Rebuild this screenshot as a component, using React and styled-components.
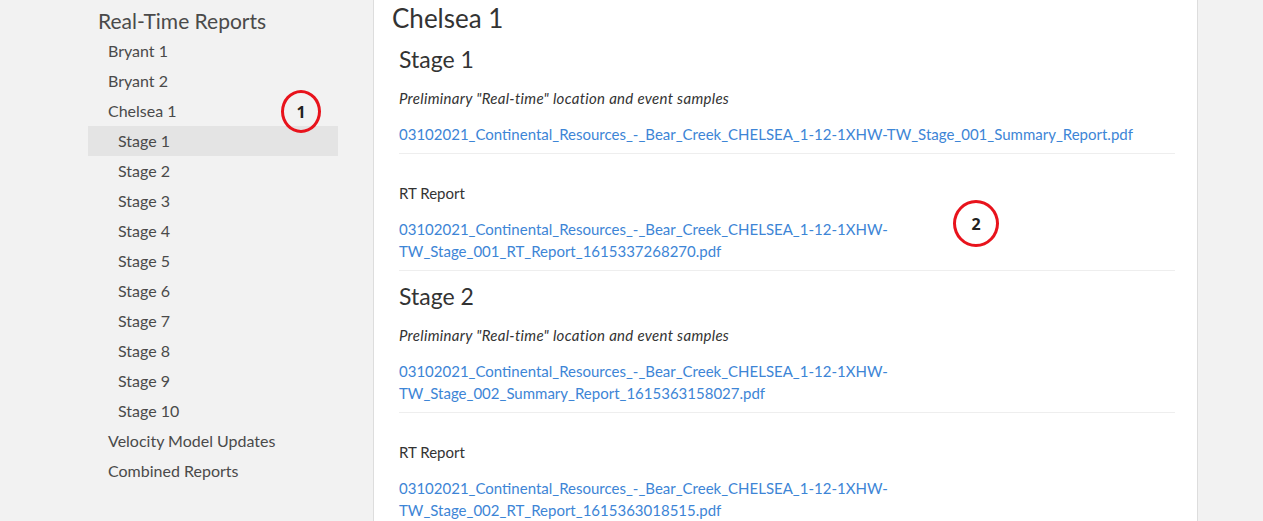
import styled, { createGlobalStyle } from 'styled-components';

const GlobalStyle = createGlobalStyle`
  html, body {
    margin: 0;
    padding: 0;
    background: #f2f2f2;
    font-family: Lato, 'Noto Sans', sans-serif;
    color: #333;
  }
`;

// page layout
const Page = styled.div`
  display: flex;
  align-items: stretch;
  min-height: 521px;
  padding-left: 88px;
  position: relative;
`;

// menu on the left
const Sidebar = styled.nav`
  width: 250px;
  padding-top: 6px;
  margin-right: 35px;
  flex-shrink: 0;
`;

const SideTitle = styled.div`
  font-size: 21px;
  line-height: 30px;
  padding-left: 10px;
  color: #4a4a4a;
`;

const SideItem = styled.div`
  font-size: 16px;
  line-height: 30px;
  padding-left: ${(p) => (p.$sub ? 30 : 20)}px;
  color: #4a4a4a;
  background: ${(p) => (p.$active ? '#e4e4e4' : 'transparent')};
`;

// white panel
const Main = styled.main`
  width: 825px;
  background: #fff;
  border-left: 1px solid #ddd;
  border-right: 1px solid #ddd;
  padding: 3px 22px 0 18px;
  box-sizing: border-box;
`;

const Heading = styled.h1`
  font-size: 26px;
  font-weight: 400;
  line-height: 30px;
  margin: 0 0 13px;
  color: #333;
`;

const Stage = styled.section`
  padding-left: 7px;
  & + & {
    margin-top: 12px;
  }
`;

const StageTitle = styled.h2`
  font-size: 23px;
  font-weight: 400;
  line-height: 27px;
  margin: 0 0 15px;
  color: #333;
`;

const Block = styled.div`
  padding-bottom: 8px;
  border-bottom: 1px solid #eee;
  & + & {
    margin-top: 29px;
  }
`;

const Label = styled.div`
  font-size: 15px;
  line-height: 20px;
  margin-bottom: 15px;
  font-style: ${(p) => (p.$italic ? 'italic' : 'normal')};
  letter-spacing: ${(p) => (p.$italic ? '0.3px' : '0')};
  color: #333;
`;

const FileLink = styled.a`
  display: block;
  font-size: 15px;
  line-height: 22px;
  color: #3d85d6;
  text-decoration: none;
`;

// annotation marks
const Marker = styled.div`
  position: absolute;
  left: ${(p) => p.$x}px;
  top: ${(p) => p.$y}px;
  width: ${(p) => p.$w}px;
  height: ${(p) => p.$h}px;
  border: 3px solid #e8131c;
  border-radius: 50%;
  box-sizing: border-box;
  display: flex;
  align-items: center;
  justify-content: center;
  font-family: 'Open Sans', sans-serif;
  font-weight: 700;
  font-size: 16px;
  color: #222;
`;

const sideItems = [
  { label: 'Bryant 1' },
  { label: 'Bryant 2' },
  { label: 'Chelsea 1' },
  ...Array.from({ length: 10 }, (_, i) => ({ label: `Stage ${i + 1}`, sub: true, active: i === 0 })),
  { label: 'Velocity Model Updates' },
  { label: 'Combined Reports' },
];

const prefix = '03102021_Continental_Resources_-_Bear_Creek_CHELSEA_1-12-1XHW-TW_Stage_';

const stages = [
  {
    title: 'Stage 1',
    files: [
      { label: 'Preliminary "Real-time" location and event samples', italic: true, file: `${prefix}001_Summary_Report.pdf` },
      { label: 'RT Report', file: `${prefix}001_RT_Report_1615337268270.pdf` },
    ],
  },
  {
    title: 'Stage 2',
    files: [
      { label: 'Preliminary "Real-time" location and event samples', italic: true, file: `${prefix}002_Summary_Report_1615363158027.pdf` },
      { label: 'RT Report', file: `${prefix}002_RT_Report_1615363018515.pdf` },
    ],
  },
];

export default function App() {
  return (
    <>
      <GlobalStyle />
      <Page>
        <Sidebar>
          <SideTitle>Real-Time Reports</SideTitle>
          {sideItems.map((it) => (
            <SideItem key={it.label} $sub={it.sub} $active={it.active}>
              {it.label}
            </SideItem>
          ))}
        </Sidebar>
        <Main>
          <Heading>Chelsea 1</Heading>
          {stages.map((s) => (
            <Stage key={s.title}>
              <StageTitle>{s.title}</StageTitle>
              {s.files.map((f) => (
                <Block key={f.file}>
                  <Label $italic={f.italic}>{f.label}</Label>
                  <FileLink href="#">{f.file}</FileLink>
                </Block>
              ))}
            </Stage>
          ))}
        </Main>
        <Marker $x={281} $y={90} $w={40} $h={43}>1</Marker>
        <Marker $x={953} $y={200} $w={46} $h={47}>2</Marker>
      </Page>
    </>
  );
}
